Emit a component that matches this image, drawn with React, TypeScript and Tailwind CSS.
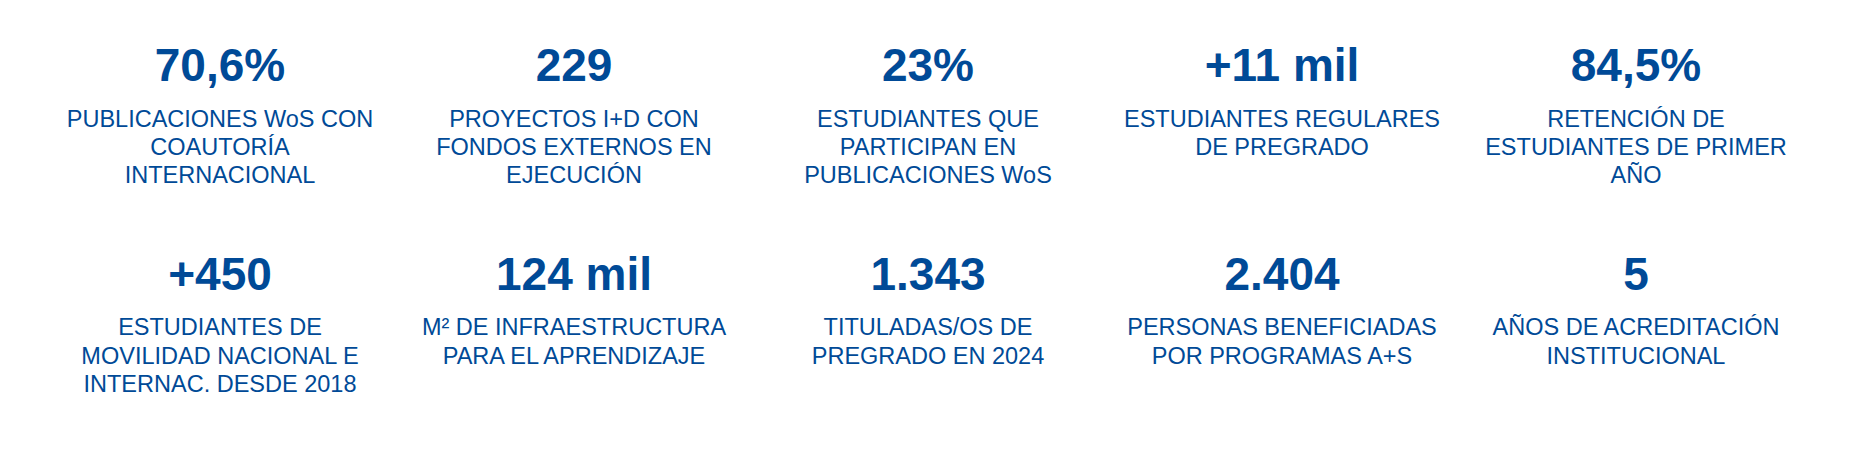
type Stat = {
  value: string;
  label: string;
};

const stats: Stat[] = [
  { value: '70,6%', label: 'PUBLICACIONES WoS CON COAUTORÍA INTERNACIONAL' },
  { value: '229', label: 'PROYECTOS I+D CON FONDOS EXTERNOS EN EJECUCIÓN' },
  { value: '23%', label: 'ESTUDIANTES QUE PARTICIPAN EN PUBLICACIONES WoS' },
  { value: '+11 mil', label: 'ESTUDIANTES REGULARES DE PREGRADO' },
  { value: '84,5%', label: 'RETENCIÓN DE ESTUDIANTES DE PRIMER AÑO' },
  { value: '+450', label: 'ESTUDIANTES DE MOVILIDAD NACIONAL E INTERNAC. DESDE 2018' },
  { value: '124 mil', label: 'M² DE INFRAESTRUCTURA PARA EL APRENDIZAJE' },
  { value: '1.343', label: 'TITULADAS/OS DE PREGRADO EN 2024' },
  { value: '2.404', label: 'PERSONAS BENEFICIADAS POR PROGRAMAS A+S' },
  { value: '5', label: 'AÑOS DE ACREDITACIÓN INSTITUCIONAL' },
];

function StatItem({ value, label }: Stat) {
  return (
    <div className="flex flex-col items-center text-center">
      <div className="text-[46px] leading-[46px] font-bold">{value}</div>
      <p className="mt-[16.5px] max-w-[328px] text-[23.5px] leading-[28.3px]">{label}</p>
    </div>
  );
}

export default function App() {
  return (
    <div className="min-h-[451px] bg-white font-['Liberation_Sans',Arial,sans-serif] text-[#004a97]">
      <div className="ml-[43px] grid w-[1770px] grid-cols-5 gap-y-[61.6px] pt-[42px]">
        {stats.map((stat) => (
          <StatItem key={stat.value} value={stat.value} label={stat.label} />
        ))}
      </div>
    </div>
  );
}
